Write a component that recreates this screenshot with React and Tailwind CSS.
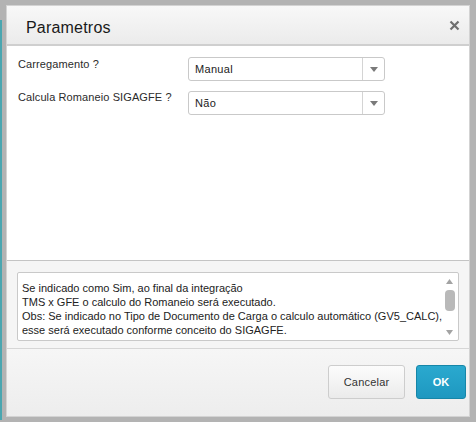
import React from 'react';

const font = { fontFamily: '"Liberation Sans", Arial, sans-serif' };

function Select({ value }) {
  return (
    <div className="flex h-[24px] w-[197px] rounded-[3px] border border-[#c9c9c9] bg-white">
      <div className="flex flex-1 items-center pl-[6px] text-[11px] tracking-[0.3px] text-[#222]">{value}</div>
      <div className="flex w-[22px] items-center justify-center border-l border-[#d4d4d4]">
        <svg width="8" height="5" viewBox="0 0 8 5">
          <path d="M0 0 L8 0 L4 5 Z" fill="#7a7a7a" />
        </svg>
      </div>
    </div>
  );
}

export default function App() {
  return (
    <div className="relative h-[422px] w-[476px] overflow-hidden bg-[#b3b3b3] pt-[5px] pl-[6px]" style={font}>
      {/* pedaço da página de trás */}
      <div className="absolute left-0 top-[20px] h-[400px] w-[2px] bg-[#4aa6b0]" />

      <div className="flex h-[412px] w-[464px] flex-col border border-[#d3d3d3] bg-[#f3f3f3]">
        {/* Header */}
        <div className="flex h-[40px] items-center justify-between border-b-2 border-[#cfcfcf] bg-gradient-to-b from-[#f8f8f8] to-[#ebebeb] pl-[19px] pr-[9px]">
          <span className="pt-[5px] text-[16px] tracking-[0.2px] text-[#1a1a1a]">Parametros</span>
          <svg width="11" height="11" viewBox="0 0 11 11">
            <path d="M1.5 1.5 L9.5 9.5 M9.5 1.5 L1.5 9.5" stroke="#6f6f6f" strokeWidth="2.2" />
          </svg>
        </div>

        {/* Body */}
        <div className="flex h-[215px] flex-col gap-[10px] border-b border-[#c4c4c4] bg-white pl-[11px] pt-[11px]">
          <div className="flex items-start">
            <div className="w-[170px] pt-[1px] text-[11px] leading-[12px] tracking-[0.1px] text-[#2b2b2b]">Carregamento ?</div>
            <Select value="Manual" />
          </div>
          <div className="flex items-start">
            <div className="w-[170px] pt-[0px] text-[11px] leading-[12px] tracking-[0.1px] text-[#2b2b2b]">Calcula Romaneio SIGAGFE ?</div>
            <Select value="Não" />
          </div>
        </div>

        {/* Help */}
        <div className="border-b border-[#d6d6d6] bg-[#f5f5f5] px-[10px] pt-[11px] pb-[7px]">
          <div className="flex h-[69px] rounded-[2px] border border-[#c9c9c9] bg-white">
            <div className="flex-1 whitespace-nowrap pl-[4px] pt-[8px] text-[11px] leading-[14px] text-[#222]">
              Se indicado como Sim, ao final da integração
              <br />
              TMS x GFE o calculo do Romaneio será executado.
              <br />
              Obs: Se indicado no Tipo de Documento de Carga o calculo automático (GV5_CALC),
              <br />
              esse será executado conforme conceito do SIGAGFE.
            </div>
            <div className="flex w-[14px] flex-col items-center pr-[3px] pt-[6px]">
              <svg width="7" height="5" viewBox="0 0 7 5">
                <path d="M0 5 L7 5 L3.5 0 Z" fill="#a3a3a3" />
              </svg>
              <div className="mt-[6px] h-[21px] w-[10px] rounded-[4px] bg-[#b9b9b9]" />
              <div className="flex-1" />
              <svg width="7" height="5" viewBox="0 0 7 5" className="mb-[5px]">
                <path d="M0 0 L7 0 L3.5 5 Z" fill="#a3a3a3" />
              </svg>
            </div>
          </div>
        </div>

        {/* Footer */}
        <div className="flex flex-1 items-start justify-end gap-[11px] bg-gradient-to-b from-[#f6f6f6] to-[#ededed] pr-[3px] pt-[16px]">
          <button className="h-[34px] w-[77px] rounded-[3px] border border-[#cdcdcd] bg-gradient-to-b from-[#fcfcfc] to-[#ebebeb] text-[11px] tracking-[0.2px] text-[#333]">
            Cancelar
          </button>
          <button className="h-[34px] w-[50px] rounded-[3px] border border-[#1686a8] bg-gradient-to-b from-[#2aa9cf] to-[#1e98c0] text-[11px] font-bold text-white">
            OK
          </button>
        </div>
      </div>
    </div>
  );
}
